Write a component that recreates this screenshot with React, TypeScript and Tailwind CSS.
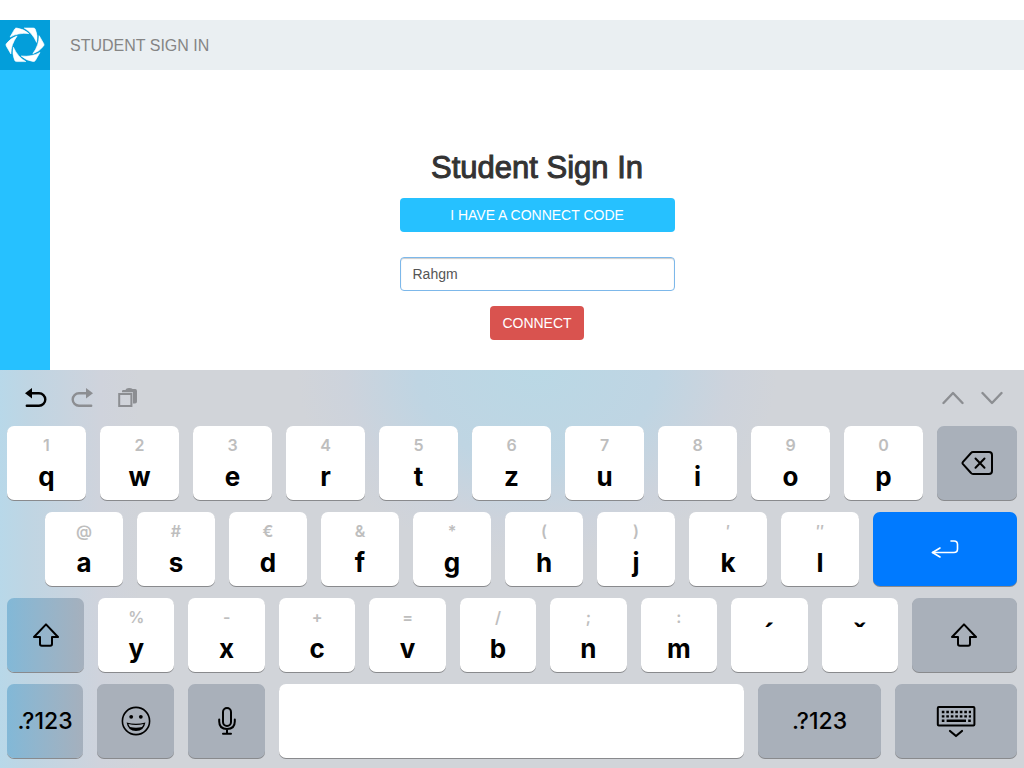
import type { ReactNode } from "react";

interface LetterKey {
  letter: string;
  hint: string;
}

const toKeys = (letters: string, hints: string): LetterKey[] =>
  letters.split("").map((letter, i) => ({ letter, hint: hints[i] }));

const topRow = toKeys("qwertzuiop", "1234567890");
const homeRow = toKeys("asdfghjkl", "@#€&*()′″");
const bottomRow = toKeys("yxcvbnm", "%-+=/;:");

const BLADES = [0, 60, 120, 180, 240, 300];

function Logo() {
  return (
    <svg viewBox="0 0 50 50" className="size-full" fill="#fff">
      {BLADES.map((angle) => (
        <path
          key={angle}
          d="M24.2 8 H33.4 Q34.800 8 35.400 9.400 Q38 15.500 36.600 22.400 Q32.400 12.800 24.200 8 Z"
          stroke="#fff"
          strokeWidth="0.6"
          transform={`rotate(${angle} 25 24.8)`}
        />
      ))}
    </svg>
  );
}

function UndoIcon() {
  return (
    <svg width="22" height="22" viewBox="0 0 22 22" fill="none">
      <path
        d="M5 6.2H14A6.2 6.2 0 0 1 14 18.800H1.800"
        stroke="currentColor"
        strokeWidth="2.4"
        strokeLinecap="round"
      />
      <path d="M0 6.200 L7 1 V11.400 Z" fill="currentColor" />
    </svg>
  );
}

function PasteIcon() {
  return (
    <svg width="22" height="22" viewBox="0 0 22 22" fill="none">
      <path
        d="M5 5.2V4.2Q5 3 6.2 3H8.4Q9 1 12 1Q14.600 1 15.600 2H18.200Q20 2 20 4V14.400Q20 16.400 18 16.400H16V5.200Z"
        fill="currentColor"
      />
      <path d="M2.200 7H14.400V19H2.200Z" stroke="currentColor" strokeWidth="2" />
    </svg>
  );
}

function ChevronIcon({ down }: { down?: boolean }) {
  return (
    <svg width="22" height="22" viewBox="0 0 22 22" fill="none">
      <path
        d={down ? "M1.500 6 L11 16 L20.500 6" : "M1.500 16 L11 6 L20.500 16"}
        stroke="currentColor"
        strokeWidth="2.400"
        strokeLinecap="round"
        strokeLinejoin="round"
      />
    </svg>
  );
}

function BackspaceIcon() {
  return (
    <svg width="32" height="24" viewBox="0 0 32 24" fill="none" stroke="currentColor" strokeWidth="2" strokeLinecap="round" strokeLinejoin="round">
      <path d="M12 1H28Q31 1 31 4V20Q31 23 28 23H12Q10.800 23 10 22L2 13.200Q1 12 2 10.800L10 2Q10.800 1 12 1Z" />
      <path d="M14.500 7.500L23.500 16.800M23.500 7.500L14.500 16.800" />
    </svg>
  );
}

function ReturnIcon() {
  return (
    <svg width="28" height="20" viewBox="0 0 28 20" fill="none" stroke="currentColor" strokeWidth="1.6" strokeLinecap="round" strokeLinejoin="round">
      <path d="M20 2H23Q26.500 2 26.500 5.500V10Q26.500 13.500 23 13.500H1.500" />
      <path d="M9 9L1.500 13.500L9 18" />
    </svg>
  );
}

function ShiftIcon() {
  return (
    <svg width="28" height="24" viewBox="0 0 28 24" fill="none" stroke="currentColor" strokeWidth="2" strokeLinejoin="round">
      <path d="M14 1.400L26 14H20V21Q20 22.800 18.200 22.800H9.800Q8 22.800 8 21V14H2Z" />
    </svg>
  );
}

function EmojiIcon() {
  return (
    <svg width="30" height="30" viewBox="0 0 30 30" fill="none">
      <circle cx="15" cy="15" r="13.600" stroke="currentColor" strokeWidth="1.600" />
      <circle cx="10.200" cy="10.800" r="1.900" fill="currentColor" />
      <circle cx="19.800" cy="10.800" r="1.900" fill="currentColor" />
      <path
        d="M5.600 16.400Q15 19.200 24.400 16.400Q23 25 15 25Q7 25 5.600 16.400Z"
        fill="currentColor"
      />
      <path d="M7.400 18Q15 20 22.600 18Q22.200 19.600 21 21Q15 22.600 9 21Q7.800 19.600 7.400 18Z" fill="#a9b0ba" />
    </svg>
  );
}

function MicIcon() {
  return (
    <svg width="18" height="28" viewBox="0 0 18 28" fill="none" stroke="currentColor" strokeWidth="2" strokeLinecap="round">
      <rect x="5" y="1" width="8" height="18" rx="4" />
      <path d="M1.200 12.500V14.500Q1.200 22 9 22Q16.800 22 16.800 14.500V12.500M9 22V26.500M5 26.800H13" />
    </svg>
  );
}

function HideKeyboardIcon() {
  return (
    <svg width="40" height="34" viewBox="0 0 40 34" fill="none">
      <rect x="1.800" y="3" width="36.600" height="18.400" rx="1" stroke="currentColor" strokeWidth="2" />
      <path
        d="M5.800 8H35M5.800 12.400H35"
        stroke="currentColor"
        strokeWidth="2.400"
        strokeDasharray="2.600 1.900"
      />
      <path d="M5.800 16.800H8.400M10.600 16.800H30M32.200 16.800H34.800" stroke="currentColor" strokeWidth="2.400" />
      <path
        d="M14 27L20 32L26 27"
        stroke="currentColor"
        strokeWidth="2.200"
        strokeLinecap="round"
        strokeLinejoin="round"
      />
    </svg>
  );
}

interface KeyProps {
  label: string;
  className: string;
  children?: ReactNode;
}

function Key({ label, className, children }: KeyProps) {
  return (
    <button
      type="button"
      aria-label={label}
      className={`flex h-[74px] flex-col items-center justify-center rounded-[7px] shadow-[0_1px_0_#898a8d] ${className}`}
    >
      {children}
    </button>
  );
}

function Letter({ letter, hint }: LetterKey) {
  return (
    <Key label={letter} className="flex-1 bg-white pt-1">
      <span className="text-base leading-6 font-semibold text-[#bebebe]">{hint}</span>
      <span className="text-[26px] leading-10 font-bold">{letter}</span>
    </Key>
  );
}

function Accent({ label, mark }: { label: string; mark: string }) {
  return (
    <Key label={label} className="flex-1 bg-white pb-1">
      <span className="font-['Open_Sans',sans-serif] text-[26px] leading-10 font-bold">{mark}</span>
    </Key>
  );
}

function Keyboard() {
  return (
    <section
      aria-label="Keyboard"
      className="flex flex-col bg-[#d1d4d9] bg-[radial-gradient(ellipse_240px_190px_at_537px_0px,#bad8e5_0%,#bfd5e3_50%,#cdd3dc_80%,#d1d4d9_100%,transparent_100%),linear-gradient(to_right,#b8d8e9_0px,#bfd5e3_28px,#cfd3dc_100px,#d1d4d9_140px)] pb-[10px] font-[Inter,sans-serif] text-black"
    >
      <div className="flex h-14 items-center justify-between pr-[21px] pl-[25px]">
        <div className="flex gap-6 text-[#8c8e92]">
          <button type="button" aria-label="Undo" className="text-black">
            <UndoIcon />
          </button>
          <button type="button" aria-label="Redo" className="-scale-x-100">
            <UndoIcon />
          </button>
          <button type="button" aria-label="Paste">
            <PasteIcon />
          </button>
        </div>
        <div className="flex gap-[17px] text-[#8c8e92]">
          <button type="button" aria-label="Previous field">
            <ChevronIcon />
          </button>
          <button type="button" aria-label="Next field">
            <ChevronIcon down />
          </button>
        </div>
      </div>

      <div className="flex flex-col gap-3 px-[7px]">
        <div className="flex gap-[14px]">
          {topRow.map((key) => (
            <Letter key={key.letter} {...key} />
          ))}
          <Key label="Backspace" className="w-20 bg-[#a9b0ba]">
            <BackspaceIcon />
          </Key>
        </div>

        <div className="flex gap-[14px] pl-[38px]">
          {homeRow.map((key) => (
            <Letter key={key.letter} {...key} />
          ))}
          <Key label="Return" className="w-36 bg-[#007aff] text-white">
            <ReturnIcon />
          </Key>
        </div>

        <div className="flex gap-[14px]">
          <Key label="Shift" className="w-[77px] bg-linear-to-r from-[#82b8d7] to-[#a5b0bd]">
            <ShiftIcon />
          </Key>
          {bottomRow.map((key) => (
            <Letter key={key.letter} {...key} />
          ))}
          <Accent label="Acute accent" mark="´" />
          <Accent label="Caron" mark="ˇ" />
          <Key label="Shift" className="w-[105px] bg-[#a9b0ba]">
            <ShiftIcon />
          </Key>
        </div>

        <div className="flex gap-[14px]">
          <Key label="Numbers" className="w-[76px] bg-linear-to-r from-[#82b8d7] to-[#a5b0bd]">
            <span className="text-[23px] leading-8 font-medium">.?123</span>
          </Key>
          <Key label="Emoji" className="w-[77px] bg-[#a9b0ba]">
            <EmojiIcon />
          </Key>
          <Key label="Dictate" className="w-[77px] bg-[#a9b0ba]">
            <MicIcon />
          </Key>
          <Key label="Space" className="flex-1 bg-white" />
          <Key label="Numbers" className="w-[123px] bg-[#a9b0ba]">
            <span className="text-[23px] leading-8 font-medium">.?123</span>
          </Key>
          <Key label="Hide keyboard" className="w-[122px] bg-[#a9b0ba]">
            <HideKeyboardIcon />
          </Key>
        </div>
      </div>
    </section>
  );
}

export default function App() {
  return (
    <div className="flex min-h-screen flex-col bg-white pt-5 font-['Liberation_Sans',Arial,sans-serif]">
      <div className="flex flex-1">
        <aside className="w-[50px] bg-[#26c1ff]">
          <a href="#" aria-label="Home" className="block size-[50px] bg-[#039eda]">
            <Logo />
          </a>
        </aside>
        <div className="flex-1">
          <header className="flex h-[50px] items-center bg-[#eaeff2] px-5 pt-px text-base text-[#858585]">
            STUDENT SIGN IN
          </header>
          <main className="mx-auto flex w-[275px] flex-col items-center pt-20 pb-[30px] text-sm">
            <h1 className="mb-3 text-[31px] leading-9 whitespace-nowrap text-[#333] [-webkit-text-stroke:1px_#333]">
              Student Sign In
            </h1>
            <button type="button" className="h-[34px] w-full rounded bg-[#26c1ff] text-white">
              I HAVE A CONNECT CODE
            </button>
            <input
              type="text"
              aria-label="Connect code"
              defaultValue="Rahgm"
              className="mt-[25px] h-[34px] w-full rounded border border-[#7db8ea] px-3 text-[#555] shadow-[inset_0_1px_1px_rgba(0,0,0,0.2)] outline-none"
            />
            <button type="button" className="mt-[15px] h-[34px] rounded bg-[#d9534f] px-3 text-white">
              CONNECT
            </button>
          </main>
        </div>
      </div>
      <Keyboard />
    </div>
  );
}
